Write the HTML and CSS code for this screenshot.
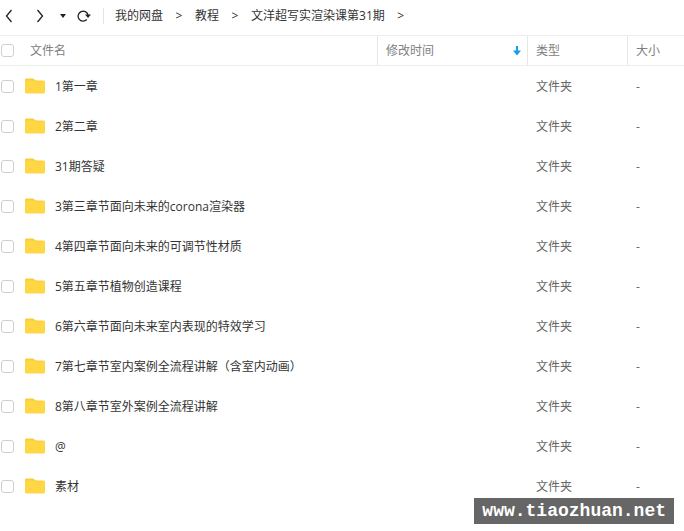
FILE: index.html
```html
<!DOCTYPE html>
<html lang="zh-CN">
<head>
<meta charset="utf-8">
<title>我的网盘</title>
<link rel="stylesheet" href="styles.css">
</head>
<body>
<svg class="defs" aria-hidden="true">
  <symbol id="folder" viewBox="0 0 20 16">
    <path d="M0 2Q0 .5 1.500 .5H7.500Q8.500 .5 9.200 1.200L10.700 2.500H18.500Q20 2.500 20 4V9H0Z" fill="#f7cb36"/>
    <path d="M0 3.500Q0 2.200 1.500 2.200H7.500Q8.800 2.200 9.500 2.800T11.500 3.500H18.500Q20 3.500 20 5V14Q20 15.500 18.500 15.500H1.500Q0 15.500 0 14Z" fill="#ffd643"/>
  </symbol>
</svg>
<header class="toolbar">
  <button class="tool back" aria-label="后退"><svg width="8" height="14" viewBox="0 0 8 14"><path class="line" d="M6.500 1L1.500 7L6.500 13"/></svg></button>
  <button class="tool forward" aria-label="前进"><svg width="8" height="14" viewBox="0 0 8 14"><path class="line" d="M1.500 1L6.500 7L1.500 13"/></svg></button>
  <button class="tool history" aria-label="历史"><svg width="6" height="4" viewBox="0 0 6 4"><path d="M0 0H6L3 4Z"/></svg></button>
  <button class="tool refresh" aria-label="刷新"><svg width="14" height="12" viewBox="0 0 14 12"><path class="line" d="M9.800 9.500A5 5 0 1 1 11 5"/><path d="M8 4.500H14L11 8Z"/></svg></button>
  <nav class="crumbs" aria-label="路径">
    <a href="#">我的网盘</a><span class="sep">&gt;</span>
    <a href="#">教程</a><span class="sep">&gt;</span>
    <a href="#">文洋超写实渲染课第31期</a><span class="sep">&gt;</span>
  </nav>
</header>
<main>
<table class="files">
  <colgroup><col class="c-check"><col><col class="c-time"><col class="c-type"><col class="c-size"></colgroup>
  <thead>
    <tr>
      <th><input type="checkbox" aria-label="全选"></th>
      <th class="title">文件名</th>
      <th class="split"><div class="sort">修改时间<svg width="8" height="10" viewBox="0 0 8 10"><path d="M3 0H5V4.500H8L4 9.500L0 4.500H3Z" fill="#149fe6"/></svg></div></th>
      <th class="split">类型</th>
      <th class="split">大小</th>
    </tr>
  </thead>
  <tbody>
    <tr><td><input type="checkbox" id="f1"></td><td><label class="name" for="f1"><svg class="folder"><use href="#folder"/></svg>1第一章</label></td><td></td><td>文件夹</td><td>-</td></tr>
    <tr><td><input type="checkbox" id="f2"></td><td><label class="name" for="f2"><svg class="folder"><use href="#folder"/></svg>2第二章</label></td><td></td><td>文件夹</td><td>-</td></tr>
    <tr><td><input type="checkbox" id="f3"></td><td><label class="name" for="f3"><svg class="folder"><use href="#folder"/></svg>31期答疑</label></td><td></td><td>文件夹</td><td>-</td></tr>
    <tr><td><input type="checkbox" id="f4"></td><td><label class="name" for="f4"><svg class="folder"><use href="#folder"/></svg>3第三章节面向未来的corona渲染器</label></td><td></td><td>文件夹</td><td>-</td></tr>
    <tr><td><input type="checkbox" id="f5"></td><td><label class="name" for="f5"><svg class="folder"><use href="#folder"/></svg>4第四章节面向未来的可调节性材质</label></td><td></td><td>文件夹</td><td>-</td></tr>
    <tr><td><input type="checkbox" id="f6"></td><td><label class="name" for="f6"><svg class="folder"><use href="#folder"/></svg>5第五章节植物创造课程</label></td><td></td><td>文件夹</td><td>-</td></tr>
    <tr><td><input type="checkbox" id="f7"></td><td><label class="name" for="f7"><svg class="folder"><use href="#folder"/></svg>6第六章节面向未来室内表现的特效学习</label></td><td></td><td>文件夹</td><td>-</td></tr>
    <tr><td><input type="checkbox" id="f8"></td><td><label class="name" for="f8"><svg class="folder"><use href="#folder"/></svg>7第七章节室内案例全流程讲解（含室内动画）</label></td><td></td><td>文件夹</td><td>-</td></tr>
    <tr><td><input type="checkbox" id="f9"></td><td><label class="name" for="f9"><svg class="folder"><use href="#folder"/></svg>8第八章节室外案例全流程讲解</label></td><td></td><td>文件夹</td><td>-</td></tr>
    <tr><td><input type="checkbox" id="f10"></td><td><label class="name" for="f10"><svg class="folder"><use href="#folder"/></svg>@</label></td><td></td><td>文件夹</td><td>-</td></tr>
    <tr><td><input type="checkbox" id="f11"></td><td><label class="name" for="f11"><svg class="folder"><use href="#folder"/></svg>素材</label></td><td></td><td>文件夹</td><td>-</td></tr>
  </tbody>
</table>
</main>
<div class="watermark">www.tiaozhuan.net</div>
</body>
</html>
```
FILE: styles.css
```css
* { box-sizing: border-box; }
body {
  margin: 0;
  background: #fff;
  color: #333;
  font: 12px/16px "Open Sans", "Noto Sans CJK SC", sans-serif;
}
svg { display: block; }
.defs { position: absolute; width: 0; height: 0; }
.toolbar {
  display: flex;
  align-items: center;
  height: 36px;
  padding: 0 4px 4px 5px;
  border-bottom: 1px solid #ededed;
}
.tool {
  display: flex;
  align-items: center;
  justify-content: flex-start;
  height: 24px;
  padding: 0;
  border: 0;
  background: none;
  fill: #222;
}
.tool svg { flex: none; }
.back { width: 31px; }
.forward { width: 24px; }
.history { width: 17px; }
.refresh { width: 16px; }
.line { fill: none; stroke: #222; stroke-width: 1.3; }
.crumbs {
  display: flex;
  align-items: center;
  margin-left: 10px;
  padding-left: 11px;
  border-left: 1px solid #e4e4e4;
}
.crumbs a { color: #333; text-decoration: none; }
.sep { width: 32px; text-align: center; }
.files {
  width: 100%;
  table-layout: fixed;
  border-collapse: separate;
  border-spacing: 0;
}
.c-check { width: 22px; }
.c-time { width: 150px; }
.c-type { width: 100px; }
.c-size { width: 57px; }
th, td { padding: 0 0 0 9px; text-align: left; color: #666; }
th { height: 30px; border-bottom: 1px solid #ededed; font-weight: 400; color: #808080; }
td { height: 40px; padding-top: 2px; }
th:first-child, td:first-child { padding: 0 0 0 1px; }
th.title { padding-left: 8px; }
td:nth-child(2) { padding-left: 3px; }
.split { padding-left: 8px; border-left: 1px solid #e6e6e6; }
.sort { display: flex; align-items: center; justify-content: space-between; padding-right: 6px; }
.name { display: flex; align-items: center; gap: 10px; color: #333; white-space: nowrap; }
.folder { width: 20px; height: 16px; margin-bottom: 2px; flex: none; }
input {
  display: block;
  appearance: none;
  width: 13px;
  height: 13px;
  margin: 0;
  border: 1px solid #cfcfcf;
  border-radius: 3px;
  background: #fff;
}
.watermark {
  position: absolute;
  right: 10px;
  top: 498px;
  padding: 0 8px;
  background: #666;
  color: #fff;
  font: bold 18px/26px "Liberation Mono", monospace;
}
```
